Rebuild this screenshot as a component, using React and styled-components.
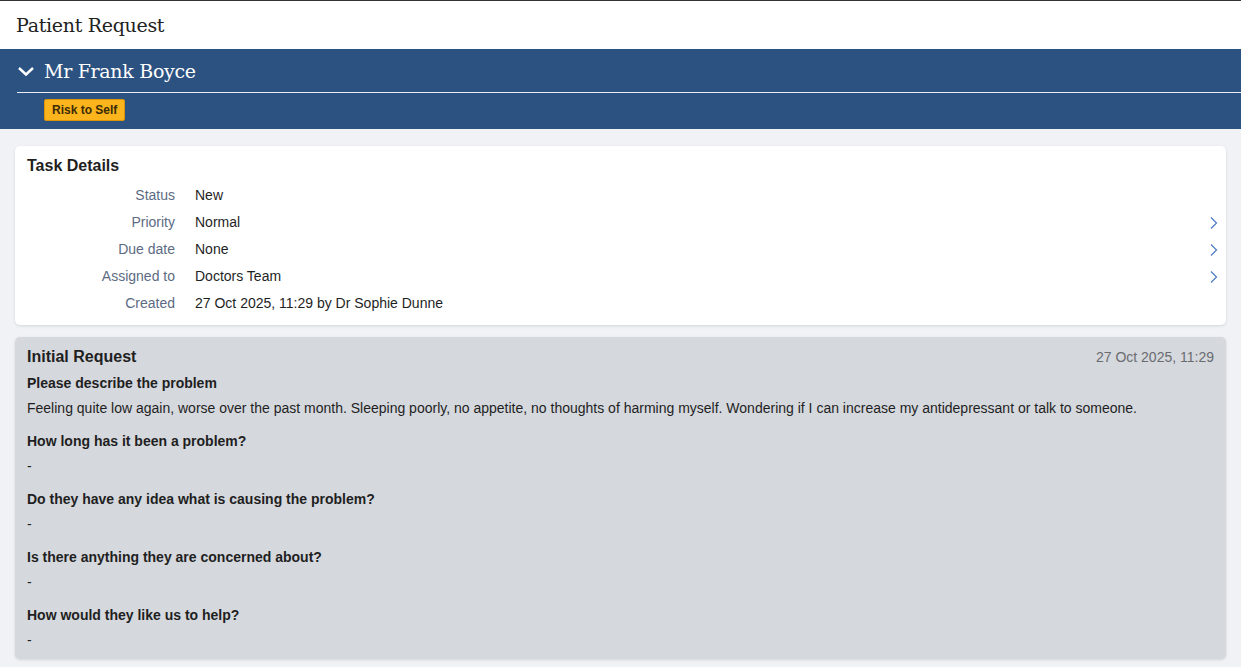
import React from 'react'
import styled, { createGlobalStyle } from 'styled-components'

const GlobalStyle = createGlobalStyle`
  html, body {
    margin: 0;
    padding: 0;
    background: #f0f2f6;
    font-family: "Liberation Sans", Arial, sans-serif;
    color: #1f1f1f;
  }
`

const Page = styled.div`
  min-height: 667px;
  border-top: 1px solid #333;
  box-sizing: border-box;
`

const TopBar = styled.div`
  height: 48px;
  background: #fff;
  display: flex;
  align-items: center;
  padding-left: 16px;
`

const PageTitle = styled.h1`
  margin: 0;
  font-family: "DejaVu Serif", Georgia, serif;
  font-weight: normal;
  font-size: 19px;
  color: #222;
  letter-spacing: -0.3px;
`

const PatientBand = styled.div`
  background: #2c5282;
  padding: 0 0 8px 17px;
`

const NameRow = styled.div`
  height: 43px;
  display: flex;
  align-items: center;
  gap: 9px;
  border-bottom: 1.5px solid #e8ecf3;
`

const PatientName = styled.h2`
  margin: 0;
  font-family: "DejaVu Serif", Georgia, serif;
  font-weight: normal;
  font-size: 19px;
  color: #fff;
  letter-spacing: -0.3px;
`

const Badges = styled.div`
  display: flex;
  padding: 6px 0 0 27px;
`

const Badge = styled.span`
  background: #fbb41b;
  border: 1px solid #d9940a;
  border-radius: 2px;
  color: #3c2b06;
  font-size: 12px;
  font-weight: bold;
  padding: 3px 7px;
  line-height: 14px;
`

const Content = styled.div`
  padding: 17px 15px 8px 15px;
  display: flex;
  flex-direction: column;
  gap: 12px;
`

const Card = styled.section`
  background: ${p => (p.$muted ? '#d5d8dd' : '#fff')};
  border-radius: 5px;
  box-shadow: 0 1px 3px rgba(0, 0, 0, 0.12);
  padding: ${p => (p.$muted ? '10px 12px 10px 12px' : '10px 12px 9px 12px')};
`

const CardHead = styled.div`
  display: flex;
  justify-content: space-between;
  align-items: baseline;
`

const CardTitle = styled.h3`
  margin: 0;
  font-size: 16px;
  font-weight: bold;
  color: #1f1f1f;
  line-height: 20px;
`

const Timestamp = styled.span`
  font-size: 14px;
  color: #6a6c70;
`

const DetailList = styled.div`
  margin-top: 5px;
  display: flex;
  flex-direction: column;
`

const DetailRow = styled.div`
  display: grid;
  grid-template-columns: 148px 1fr 16px;
  column-gap: 20px;
  align-items: center;
  height: 27px;
  font-size: 14px;
`

const Label = styled.span`
  text-align: right;
  color: #5c6b83;
`

const Value = styled.span`
  color: #1f1f1f;
`

const Chevron = styled.svg`
  width: 10px;
  height: 14px;
  justify-self: end;
  margin-right: -5px;
  margin-top: 2px;
`

const Question = styled.div`
  font-size: 14px;
  font-weight: bold;
  color: #1f1f1f;
  margin-top: ${p => (p.$first ? '8px' : '16px')};
  line-height: 17px;
`

const Answer = styled.div`
  font-size: 14px;
  color: #1f1f1f;
  margin-top: 8px;
  line-height: 17px;
`

const details = [
  { label: 'Status', value: 'New' },
  { label: 'Priority', value: 'Normal', link: true },
  { label: 'Due date', value: 'None', link: true },
  { label: 'Assigned to', value: 'Doctors Team', link: true },
  { label: 'Created', value: '27 Oct 2025, 11:29 by Dr Sophie Dunne' },
]

const questions = [
  {
    q: 'Please describe the problem',
    a: 'Feeling quite low again, worse over the past month. Sleeping poorly, no appetite, no thoughts of harming myself. Wondering if I can increase my antidepressant or talk to someone.',
  },
  { q: 'How long has it been a problem?', a: '-' },
  { q: 'Do they have any idea what is causing the problem?', a: '-' },
  { q: 'Is there anything they are concerned about?', a: '-' },
  { q: 'How would they like us to help?', a: '-' },
]

const App = () => (
  <Page>
    <GlobalStyle />
    <TopBar>
      <PageTitle>Patient Request</PageTitle>
    </TopBar>
    <PatientBand>
      <NameRow>
        <svg width="18" height="12" viewBox="0 0 18 12">
          <path d="M2 3 L9 9.5 L16 3" fill="none" stroke="#fff" strokeWidth="2.4" />
        </svg>
        <PatientName>Mr Frank Boyce</PatientName>
      </NameRow>
      <Badges>
        <Badge>Risk to Self</Badge>
      </Badges>
    </PatientBand>

    <Content>
      <Card>
        <CardTitle>Task Details</CardTitle>
        <DetailList>
          {details.map(d => (
            <DetailRow key={d.label}>
              <Label>{d.label}</Label>
              <Value>{d.value}</Value>
              {d.link ? (
                <Chevron viewBox="0 0 10 14">
                  <path d="M2 1.5 L7.5 7 L2 12.5" fill="none" stroke="#4b7bc4" strokeWidth="1.2" />
                </Chevron>
              ) : <span />}
            </DetailRow>
          ))}
        </DetailList>
      </Card>

      <Card $muted>
        <CardHead>
          <CardTitle>Initial Request</CardTitle>
          <Timestamp>27 Oct 2025, 11:29</Timestamp>
        </CardHead>
        {questions.map((item, i) => (
          <React.Fragment key={item.q}>
            <Question $first={i === 0}>{item.q}</Question>
            <Answer>{item.a}</Answer>
          </React.Fragment>
        ))}
      </Card>
    </Content>
  </Page>
)

export default App
